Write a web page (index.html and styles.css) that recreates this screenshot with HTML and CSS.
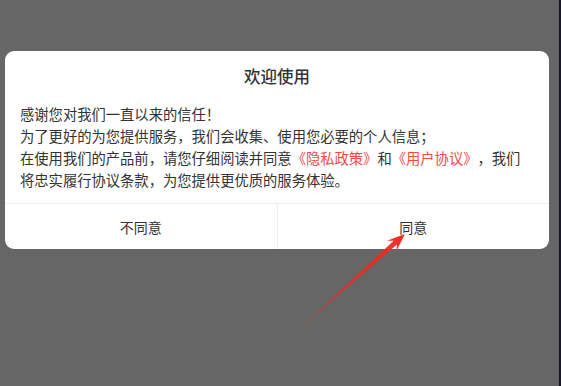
FILE: index.html
```html
<!DOCTYPE html>
<html lang="zh-CN">
<head>
<meta charset="utf-8">
<title>欢迎使用</title>
<link rel="stylesheet" href="styles.css">
</head>
<body>
<div class="page">
  <div class="screen">
    <div class="dialog">
      <div class="title">欢迎使用</div>
      <div class="content">
        <p>感谢您对我们一直以来的信任！</p>
        <p>为了更好的为您提供服务，我们会收集、使用您必要的个人信息；</p>
        <p>在使用我们的产品前，请您仔细阅读并同意<span class="link">《隐私政策》</span>和<span class="link">《用户协议》</span>，我们将忠实履行协议条款，为您提供更优质的服务体验。</p>
      </div>
      <div class="actions">
        <div class="btn">不同意</div>
        <div class="btn">同意</div>
      </div>
    </div>
  </div>
  <div class="edge"></div>
</div>
<svg class="arrow" width="561" height="386" viewBox="0 0 561 386">
  <defs>
    <linearGradient id="ag" gradientUnits="userSpaceOnUse" x1="287" y1="340" x2="405" y2="234">
      <stop offset="0" stop-color="#f0281e" stop-opacity="0"/>
      <stop offset="0.5" stop-color="#f0281e" stop-opacity="0.7"/>
      <stop offset="1" stop-color="#f0281e" stop-opacity="1"/>
    </linearGradient>
  </defs>
  <polygon fill="url(#ag)" points="287,340 396.97,244.56 396.3,251.2 405,234 386.9,240.8 393.63,240.84"/>
</svg>
</body>
</html>
```
FILE: styles.css
```css
html, body {
  margin: 0;
  padding: 0;
}
body {
  width: 561px;
  height: 386px;
  overflow: hidden;
  background: #666666;
  font-family: "Noto Sans CJK SC", "Noto Sans", sans-serif;
  position: relative;
  text-spacing-trim: space-all;
}
.page {
  display: flex;
  height: 386px;
}
.screen {
  flex: 1;
  padding-top: 51px;
  padding-left: 5px;
}
.edge {
  width: 2px;
  background: #16162a;
}
.dialog {
  width: 544px;
  background: #ffffff;
  border-radius: 9px;
  overflow: hidden;
}
.title {
  padding-top: 13px;
  height: 24px;
  line-height: 24px;
  text-align: center;
  font-size: 16.5px;
  font-weight: 500;
  color: #333333;
}
.content {
  padding: 15px 15px 12px 15px;
  font-size: 14.3px;
  line-height: 22px;
  color: #333333;
}
.content p {
  margin: 0;
}
.link {
  color: #ee4a4a;
}
.actions {
  display: flex;
  border-top: 1px solid #eeeeee;
  height: 45px;
}
.btn {
  flex: 1;
  display: flex;
  align-items: center;
  justify-content: center;
  font-size: 14px;
  color: #333333;
}
.btn + .btn {
  border-left: 1px solid #eeeeee;
}
.arrow {
  position: absolute;
  left: 0;
  top: 0;
  pointer-events: none;
}
```
